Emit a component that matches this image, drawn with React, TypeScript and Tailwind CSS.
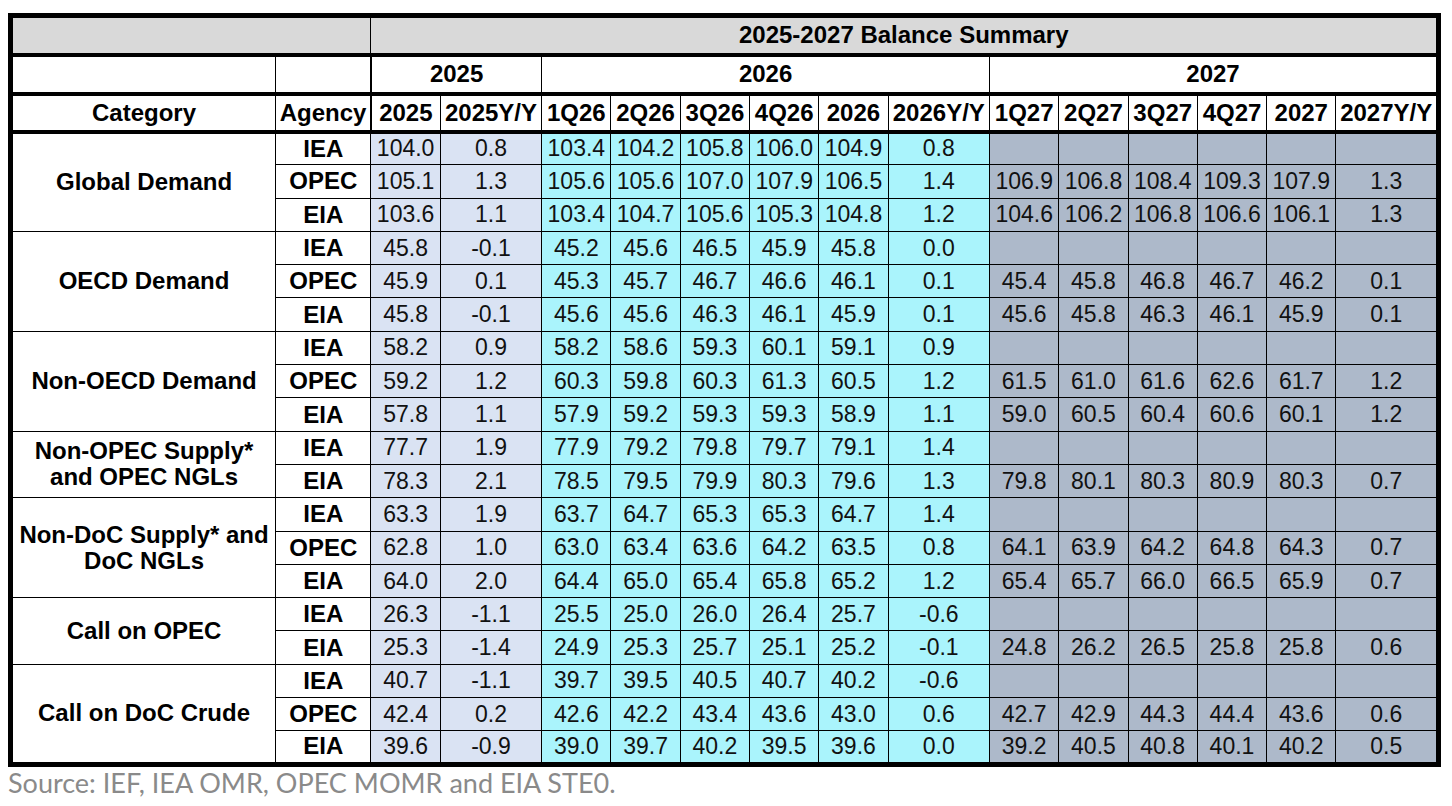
type Row = [string, ...string[]];

type Group = {
  lines: string[];
  rows: Row[];
};

const GROUPS: Group[] = [
  {
    lines: ["Global Demand"],
    rows: [
      ["IEA", "104.0", "0.8", "103.4", "104.2", "105.8", "106.0", "104.9", "0.8"],
      ["OPEC", "105.1", "1.3", "105.6", "105.6", "107.0", "107.9", "106.5", "1.4", "106.9", "106.8", "108.4", "109.3", "107.9", "1.3"],
      ["EIA", "103.6", "1.1", "103.4", "104.7", "105.6", "105.3", "104.8", "1.2", "104.6", "106.2", "106.8", "106.6", "106.1", "1.3"],
    ],
  },
  {
    lines: ["OECD Demand"],
    rows: [
      ["IEA", "45.8", "-0.1", "45.2", "45.6", "46.5", "45.9", "45.8", "0.0"],
      ["OPEC", "45.9", "0.1", "45.3", "45.7", "46.7", "46.6", "46.1", "0.1", "45.4", "45.8", "46.8", "46.7", "46.2", "0.1"],
      ["EIA", "45.8", "-0.1", "45.6", "45.6", "46.3", "46.1", "45.9", "0.1", "45.6", "45.8", "46.3", "46.1", "45.9", "0.1"],
    ],
  },
  {
    lines: ["Non-OECD Demand"],
    rows: [
      ["IEA", "58.2", "0.9", "58.2", "58.6", "59.3", "60.1", "59.1", "0.9"],
      ["OPEC", "59.2", "1.2", "60.3", "59.8", "60.3", "61.3", "60.5", "1.2", "61.5", "61.0", "61.6", "62.6", "61.7", "1.2"],
      ["EIA", "57.8", "1.1", "57.9", "59.2", "59.3", "59.3", "58.9", "1.1", "59.0", "60.5", "60.4", "60.6", "60.1", "1.2"],
    ],
  },
  {
    lines: ["Non-OPEC Supply*", "and OPEC NGLs"],
    rows: [
      ["IEA", "77.7", "1.9", "77.9", "79.2", "79.8", "79.7", "79.1", "1.4"],
      ["EIA", "78.3", "2.1", "78.5", "79.5", "79.9", "80.3", "79.6", "1.3", "79.8", "80.1", "80.3", "80.9", "80.3", "0.7"],
    ],
  },
  {
    lines: ["Non-DoC Supply* and", "DoC NGLs"],
    rows: [
      ["IEA", "63.3", "1.9", "63.7", "64.7", "65.3", "65.3", "64.7", "1.4"],
      ["OPEC", "62.8", "1.0", "63.0", "63.4", "63.6", "64.2", "63.5", "0.8", "64.1", "63.9", "64.2", "64.8", "64.3", "0.7"],
      ["EIA", "64.0", "2.0", "64.4", "65.0", "65.4", "65.8", "65.2", "1.2", "65.4", "65.7", "66.0", "66.5", "65.9", "0.7"],
    ],
  },
  {
    lines: ["Call on OPEC"],
    rows: [
      ["IEA", "26.3", "-1.1", "25.5", "25.0", "26.0", "26.4", "25.7", "-0.6"],
      ["EIA", "25.3", "-1.4", "24.9", "25.3", "25.7", "25.1", "25.2", "-0.1", "24.8", "26.2", "26.5", "25.8", "25.8", "0.6"],
    ],
  },
  {
    lines: ["Call on DoC Crude"],
    rows: [
      ["IEA", "40.7", "-1.1", "39.7", "39.5", "40.5", "40.7", "40.2", "-0.6"],
      ["OPEC", "42.4", "0.2", "42.6", "42.2", "43.4", "43.6", "43.0", "0.6", "42.7", "42.9", "44.3", "44.4", "43.6", "0.6"],
      ["EIA", "39.6", "-0.9", "39.0", "39.7", "40.2", "39.5", "39.6", "0.0", "39.2", "40.5", "40.8", "40.1", "40.2", "0.5"],
    ],
  },
];

const HEADS = ["2025", "2025Y/Y", "1Q26", "2Q26", "3Q26", "4Q26", "2026", "2026Y/Y", "1Q27", "2Q27", "3Q27", "4Q27", "2027", "2027Y/Y"];

const WIDTHS = [264, 95, 69, 101, 69, 69, 69, 69, 69, 101, 69, 69, 69, 69, 69, 102];

// fill per data column: 2025 block, 2026 block, 2027 block
const BG = [
  "bg-[#dae3f3]", "bg-[#dae3f3]",
  "bg-[#aaf4fc]", "bg-[#aaf4fc]", "bg-[#aaf4fc]", "bg-[#aaf4fc]", "bg-[#aaf4fc]", "bg-[#aaf4fc]",
  "bg-[#adb9ca]", "bg-[#adb9ca]", "bg-[#adb9ca]", "bg-[#adb9ca]", "bg-[#adb9ca]", "bg-[#adb9ca]",
];

const cell = "border border-black p-0 text-center align-middle";

export default function App() {
  return (
    <div className="min-h-[806px] bg-white pl-2 pt-[13px] font-[family-name:'Liberation_Sans',Arial,sans-serif] text-black">
      <table className="w-[1433px] table-fixed border-collapse border-[5px] border-black">
        <colgroup>
          {WIDTHS.map((w, i) => (
            <col key={i} style={{ width: w }} />
          ))}
        </colgroup>
        <thead className="leading-none">
          <tr className="h-[39px] bg-[#d9d9d9]">
            <th colSpan={2} className={`${cell} border-b-4`} />
            <th colSpan={14} className={`${cell} border-b-4 text-[24px] font-bold`}>
              2025-2027 Balance Summary
            </th>
          </tr>
          <tr className="h-[39px] bg-white">
            <th className={`${cell} border-b-4`} />
            <th className={`${cell} border-b-4 border-r-2`} />
            <th colSpan={2} className={`${cell} border-b-4 text-[24px] font-bold`}>2025</th>
            <th colSpan={6} className={`${cell} border-b-4 text-[24px] font-bold`}>2026</th>
            <th colSpan={6} className={`${cell} border-b-4 text-[24px] font-bold`}>2027</th>
          </tr>
          <tr className="h-[38px] bg-white text-[24px] font-bold">
            <th className={`${cell} border-b-4`}>Category</th>
            <th className={`${cell} border-b-4 border-r-2`}>Agency</th>
            {HEADS.map((h) => (
              <th key={h} className={`${cell} border-b-4 whitespace-nowrap`}>
                {h}
              </th>
            ))}
          </tr>
        </thead>
        <tbody>
          {GROUPS.map((g) =>
            g.rows.map((row, ri) => (
              <tr key={g.lines[0] + ri} className="h-[33.3px]">
                {ri === 0 && (
                  <td rowSpan={g.rows.length} className={`${cell} bg-white text-[24px] font-bold leading-[26px]`}>
                    {g.lines.map((l) => (
                      <div key={l}>{l}</div>
                    ))}
                  </td>
                )}
                <td className={`${cell} bg-white text-[24px] font-bold leading-none`}>{row[0]}</td>
                {BG.map((bg, ci) => (
                  <td key={ci} className={`${cell} ${bg} text-[23px] leading-none text-[#111]`}>
                    {row[ci + 1] ?? ""}
                  </td>
                ))}
              </tr>
            ))
          )}
        </tbody>
      </table>
      <p className="mt-[1px] font-[family-name:Lato,sans-serif] text-[27px] leading-[30px] text-[#8a8a8a]">
        Source: IEF, IEA OMR, OPEC MOMR and EIA STE0.
      </p>
    </div>
  );
}
